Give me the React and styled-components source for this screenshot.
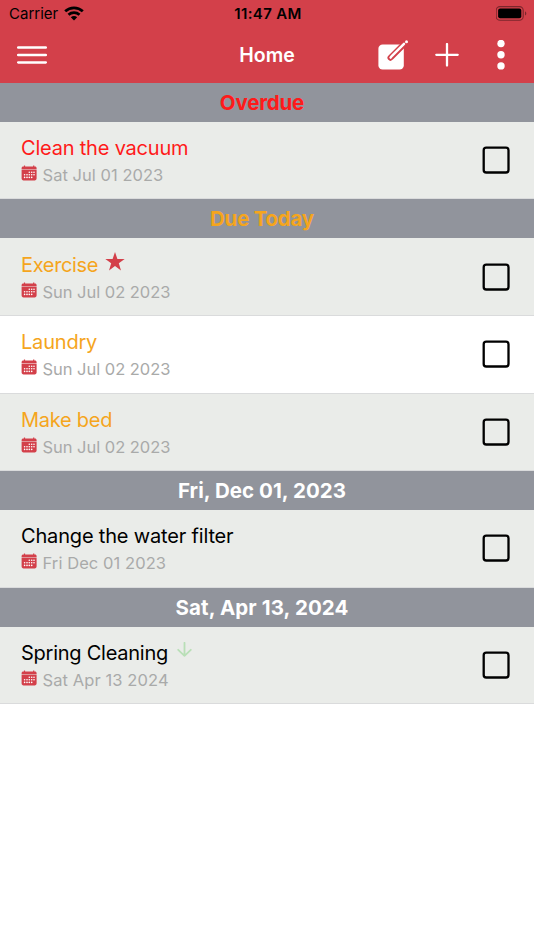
import React from 'react';
import styled, { createGlobalStyle } from 'styled-components';

const colors = {
    primary: '#d3404a',
    band: '#91949c',
    rowDark: '#eaece9',
    rowLight: '#ffffff',
    overdue: '#ff1a1a',
    today: '#f5a51d',
    muted: '#a9aaa9',
};

const GlobalStyle = createGlobalStyle`
    body {
        margin: 0;
        background: #fff;
        font-family: Inter, "Liberation Sans", sans-serif;
    }
    svg {
        display: block;
        flex-shrink: 0;
    }
`;

const Screen = styled.div`
    min-height: 950px;
    overflow: hidden;
`;

const Header = styled.header`
    height: 83px;
    background: ${colors.primary};
`;

const StatusBar = styled.div`
    display: grid;
    grid-template-columns: 1fr auto 1fr;
    align-items: center;
    height: 27px;
    padding: 0 7px 0 9px;
    color: #000;
`;

const Carrier = styled.div`
    display: flex;
    align-items: center;
    gap: 6px;
    font-size: 15px;
    letter-spacing: 0;
`;

const Clock = styled.div`
    font-size: 15px;
    font-weight: 600;
    letter-spacing: 0.35px;
`;

const Battery = styled.div`
    display: flex;
    justify-content: flex-end;
`;

const NavBar = styled.nav`
    display: grid;
    grid-template-columns: 1fr auto 1fr;
    align-items: center;
    height: 56px;
    padding: 0 29px 0 17px;
    color: #fff;
`;

const Title = styled.h1`
    margin: 0 0 0 12px;
    font-size: 19.5px;
    font-weight: 600;
    line-height: 56px;
    letter-spacing: 0;
`;

const Actions = styled.div`
    display: flex;
    align-items: center;
    justify-content: flex-end;
`;

const IconButton = styled.button`
    display: block;
    margin: 0 0 0 ${props => props.$space || 0}px;
    padding: 0;
    border: 0;
    background: none;
    color: inherit;
`;

const Band = styled.h2`
    box-sizing: border-box;
    height: 38.8px;
    margin: 0;
    padding-right: 10px;
    background: ${colors.band};
    color: ${props => props.$color || '#fff'};
    font-size: 20.5px;
    font-weight: 700;
    line-height: 39px;
    letter-spacing: ${props => props.$spacing || 0}px;
    text-align: center;
`;

const Row = styled.div`
    box-sizing: border-box;
    display: flex;
    align-items: center;
    justify-content: space-between;
    height: 77.7px;
    padding: 0 24px 0 21px;
    border-bottom: 1px solid #dadbdc;
    background: ${props => (props.$light ? colors.rowLight : colors.rowDark)};
`;

const Info = styled.div`
    margin-top: 3px;
`;

const Name = styled.div`
    display: flex;
    align-items: center;
    height: 27px;
    color: ${props => props.$color || '#000'};
    font-size: 20px;
    letter-spacing: ${props => props.$spacing || 0}px;
    white-space: nowrap;
`;

const DueDate = styled.div`
    display: flex;
    align-items: center;
    gap: 5.5px;
    height: 27px;
    color: ${colors.muted};
    font-size: 16.5px;
    letter-spacing: ${props => props.$spacing || 0}px;
    white-space: nowrap;
`;

const Mark = styled.span`
    margin: ${props => props.$margin};
`;

const WifiIcon = () => (
    <svg width="20" height="15" viewBox="0 0 20 15">
        <g fill="none" stroke="#000" strokeWidth="2.8">
            <path d="M1.2 5.3C6.2.7 13.8.7 18.8 5.3" />
            <path d="M4.5 8.8c3.1-2.8 7.9-2.8 11 0" />
        </g>
        <path d="M10 14.4 6.8 11.3c1.8-1.6 4.6-1.6 6.4 0Z" />
    </svg>
);

const BatteryIcon = () => (
    <svg width="31" height="15" viewBox="0 0 31 15">
        <rect x=".2" y=".6" width="27" height="13.6" rx="3.8" fill="none" stroke="#7c262c" strokeWidth="1.1" />
        <rect x="2.1" y="2.5" width="23.2" height="9.8" rx="2" />
        <path d="M29 5.2c1.8.8 1.8 3.6 0 4.4Z" fill="#7c262c" />
    </svg>
);

const MenuIcon = () => (
    <svg width="30" height="18" viewBox="0 0 30 18">
        <path d="M1.2 1.6h27.6M1.2 9h27.6M1.2 16.4h27.6" stroke="#fff" strokeWidth="2.5" strokeLinecap="round" />
    </svg>
);

const EditIcon = () => (
    <svg width="31" height="31" viewBox="0 0 31 31">
        <rect x=".4" y="4.6" width="25.4" height="25" rx="4.2" fill="#fff" />
        <path d="M26.6 3.6 13.6 16.6l-1.2 1.2" stroke={colors.primary} strokeWidth="5.8" strokeLinecap="round" />
        <path d="M26 3.8 14 15.8l-1.4 1.8" fill="none" stroke="#fff" strokeWidth="2.5" strokeLinecap="round" />
        <circle cx="28.5" cy="1.7" r="1.5" fill="#fff" />
    </svg>
);

const PlusIcon = () => (
    <svg width="24" height="24" viewBox="0 0 24 24">
        <path d="M12 1.1v21.4M1.3 11.8h21.4" stroke="#fff" strokeWidth="2.3" strokeLinecap="round" />
    </svg>
);

const MoreIcon = () => (
    <svg width="8" height="30" viewBox="0 0 8 30" fill="#fff">
        <circle cx="4" cy="3.5" r="3.7" />
        <circle cx="4" cy="14.7" r="3.7" />
        <circle cx="4" cy="25.9" r="3.7" />
    </svg>
);

const dots = [
    [8.3, 7.2], [10.7, 7.2], [13, 7.2],
    [3.6, 9.8], [6, 9.8], [8.3, 9.8], [10.7, 9.8], [13, 9.8],
    [3.6, 12.4], [6, 12.4], [8.3, 12.4], [10.7, 12.4],
];

const CalendarIcon = () => (
    <svg width="16" height="16" viewBox="0 0 16 16">
        <path
            d="M.6 4.2V3.1c0-1 .7-1.7 1.7-1.7h.6V.5h1.2v.9h8V.5h1.2v.9h.6c1 0 1.7.7 1.7 1.7v1.1ZM.6 4.8h15v8.7c0 1.1-.8 1.9-1.9 1.9H2.5c-1.1 0-1.9-.8-1.9-1.9Z"
            fill={colors.primary}
        />
        {dots.map(([x, y]) => <circle key={`${x}-${y}`} cx={x} cy={y} r=".8" fill="#fff" />)}
    </svg>
);

const StarIcon = () => (
    <svg width="20" height="19" viewBox="0 0 20 19">
        <path d="m10 0 2.4 7h7.3l-5.9 4.3 2.2 7.1-6-4.3-6 4.3 2.2-7.1L.3 7h7.3Z" fill={colors.primary} />
    </svg>
);

const ArrowIcon = () => (
    <svg width="15" height="15" viewBox="0 0 15 15">
        <path d="M7.5.8v13M1.2 7.8l6.3 6 6.3-6" fill="none" stroke="#b9dfb7" strokeWidth="1.8" strokeLinecap="round" strokeLinejoin="round" />
    </svg>
);

const CheckboxIcon = () => (
    <svg width="28" height="28" viewBox="0 0 28 28">
        <rect x="1.7" y="1.7" width="24.8" height="24.8" rx="2.6" fill="none" stroke="#000" strokeWidth="2.3" />
    </svg>
);

const marks = {
    high: <Mark $margin="-6px 0 0 7px"><StarIcon /></Mark>,
    low: <Mark $margin="-6px 0 0 9px"><ArrowIcon /></Mark>,
};

const groups = [
    {
        title: 'Overdue', color: colors.overdue, spacing: -0.2,
        tasks: [{ name: 'Clean the vacuum', date: 'Sat Jul 01 2023', spacing: -0.2, dateSpacing: 0.04 }],
    },
    {
        title: 'Due Today', color: colors.today, spacing: -0.25,
        tasks: [
            { name: 'Exercise', date: 'Sun Jul 02 2023', mark: 'high', spacing: -0.34, dateSpacing: -0.03 },
            { name: 'Laundry', date: 'Sun Jul 02 2023', light: true, spacing: -0.2, dateSpacing: -0.03 },
            { name: 'Make bed', date: 'Sun Jul 02 2023', spacing: -0.25, dateSpacing: -0.03 },
        ],
    },
    {
        title: 'Fri, Dec 01, 2023', spacing: 0.05,
        tasks: [{ name: 'Change the water filter', date: 'Fri Dec 01 2023', spacing: -0.17, dateSpacing: 0.08 }],
    },
    {
        title: 'Sat, Apr 13, 2024', spacing: 0.1,
        tasks: [{ name: 'Spring Cleaning', date: 'Sat Apr 13 2024', mark: 'low', spacing: -0.25, dateSpacing: 0.1 }],
    },
];

const Task = ({ task, color }) => (
    <Row $light={task.light}>
        <Info>
            <Name $color={color} $spacing={task.spacing}>
                {task.name}
                {task.mark && marks[task.mark]}
            </Name>
            <DueDate $spacing={task.dateSpacing}>
                <Mark $margin="-4px 0 0"><CalendarIcon /></Mark>
                {task.date}
            </DueDate>
        </Info>
        <CheckboxIcon />
    </Row>
);

const App = () => (
    <Screen>
        <GlobalStyle />
        <Header>
            <StatusBar>
                <Carrier>Carrier <WifiIcon /></Carrier>
                <Clock>11:47 AM</Clock>
                <Battery><BatteryIcon /></Battery>
            </StatusBar>
            <NavBar>
                <IconButton aria-label="Menu"><MenuIcon /></IconButton>
                <Title>Home</Title>
                <Actions>
                    <IconButton aria-label="Edit"><EditIcon /></IconButton>
                    <IconButton aria-label="Add" $space={26}><PlusIcon /></IconButton>
                    <IconButton aria-label="More" $space={38}><MoreIcon /></IconButton>
                </Actions>
            </NavBar>
        </Header>
        {groups.map(group => (
            <section key={group.title}>
                <Band $color={group.color} $spacing={group.spacing}>{group.title}</Band>
                {group.tasks.map(task => <Task key={task.name} task={task} color={group.color} />)}
            </section>
        ))}
    </Screen>
);

export default App;
